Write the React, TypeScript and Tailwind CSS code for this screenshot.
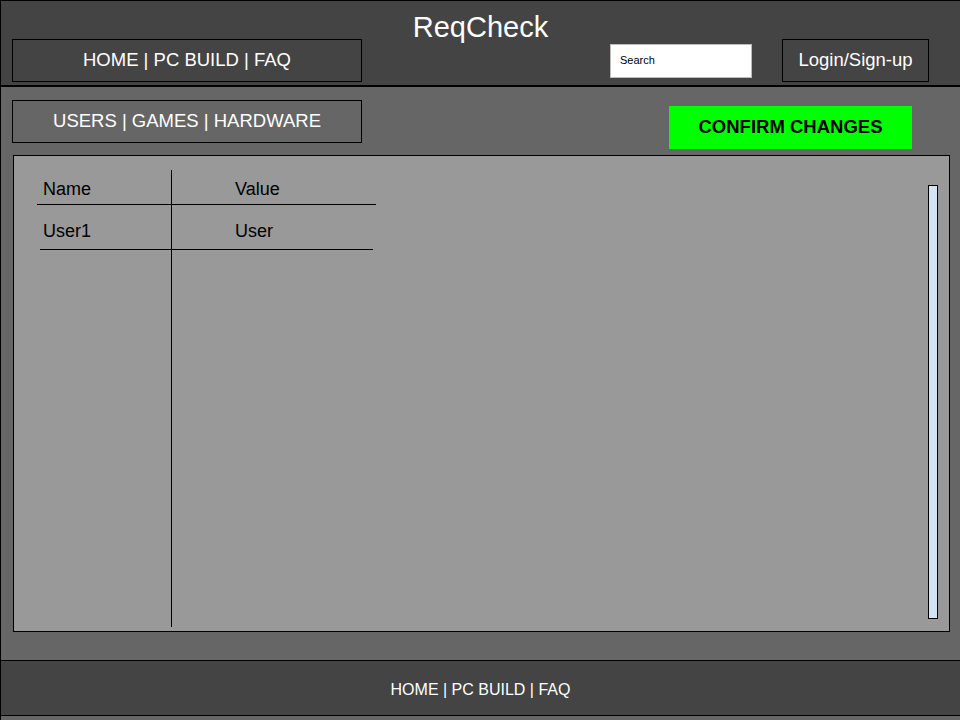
const font = { fontFamily: '"Liberation Sans", Arial, sans-serif' };

function NavBox({ label, className = "" }: { label: string; className?: string }) {
  return (
    <div
      className={`flex h-[43px] w-[350px] items-center justify-center border border-black pb-[2px] text-[18.5px] text-white ${className}`}
    >
      {label}
    </div>
  );
}

function Header() {
  return (
    <header className="flex h-[87px] flex-col border-t border-b-2 border-black bg-[#444] pt-[14px]">
      <div className="h-[24px] text-center text-[29px] leading-[24px] text-white">ReqCheck</div>
      <div className="flex items-center pl-[11px]">
        <NavBox label="HOME | PC BUILD | FAQ" />
        <div className="ml-[248px] flex h-[34px] w-[142px] items-center border border-[#bbb] bg-white pl-[9px] text-[11px] text-black">
          Search
        </div>
        <div className="ml-[30px] flex h-[43px] w-[147px] items-center justify-center border border-black pb-[2px] text-[18.5px] text-white">
          Login/Sign-up
        </div>
      </div>
    </header>
  );
}

function UserTable() {
  return (
    <div className="ml-[23px] mt-[14px] flex h-[457px] w-[339px] flex-col text-[18px] leading-[22px] text-black">
      <div className="flex border-b border-black">
        <div className="w-[135px] border-r border-black pb-[4px] pl-[6px] pt-[8px]">Name</div>
        <div className="flex-1 pb-[4px] pl-[63px] pt-[8px]">Value</div>
      </div>
      <div className="flex">
        <div className="w-[135px] border-r border-black pb-[7px] pl-[6px] pt-[15px]">User1</div>
        <div className="flex-1 pb-[7px] pl-[63px] pt-[15px]">User</div>
      </div>
      <div className="ml-[3px] mr-[3px] border-b border-black" />
      <div className="w-[135px] flex-1 border-r border-black" />
    </div>
  );
}

export default function App() {
  return (
    <div className="flex h-[720px] w-[960px] flex-col border-l border-black bg-[#666]" style={font}>
      <Header />
      <main className="flex flex-1 flex-col pt-[13px]">
        <div className="flex items-start pl-[11px]">
          <NavBox label="USERS | GAMES | HARDWARE" />
          <button className="ml-[307px] mt-[6px] h-[43px] w-[243px] bg-[#00ff00] pb-[2px] text-[18.5px] font-bold text-black">
            CONFIRM CHANGES
          </button>
        </div>
        <section className="ml-[12px] mt-[6px] flex h-[477px] w-[937px] border border-black bg-[#999]">
          <UserTable />
          <div className="ml-auto mr-[11px] mt-[29px] h-[434px] w-[10px] border border-black bg-[#d4e3f3]" />
        </section>
      </main>
      <footer className="mb-[4px] flex h-[56px] items-center justify-center border-y border-black bg-[#444] pt-[3px] text-[16px] text-white">
        HOME | PC BUILD | FAQ
      </footer>
    </div>
  );
}
